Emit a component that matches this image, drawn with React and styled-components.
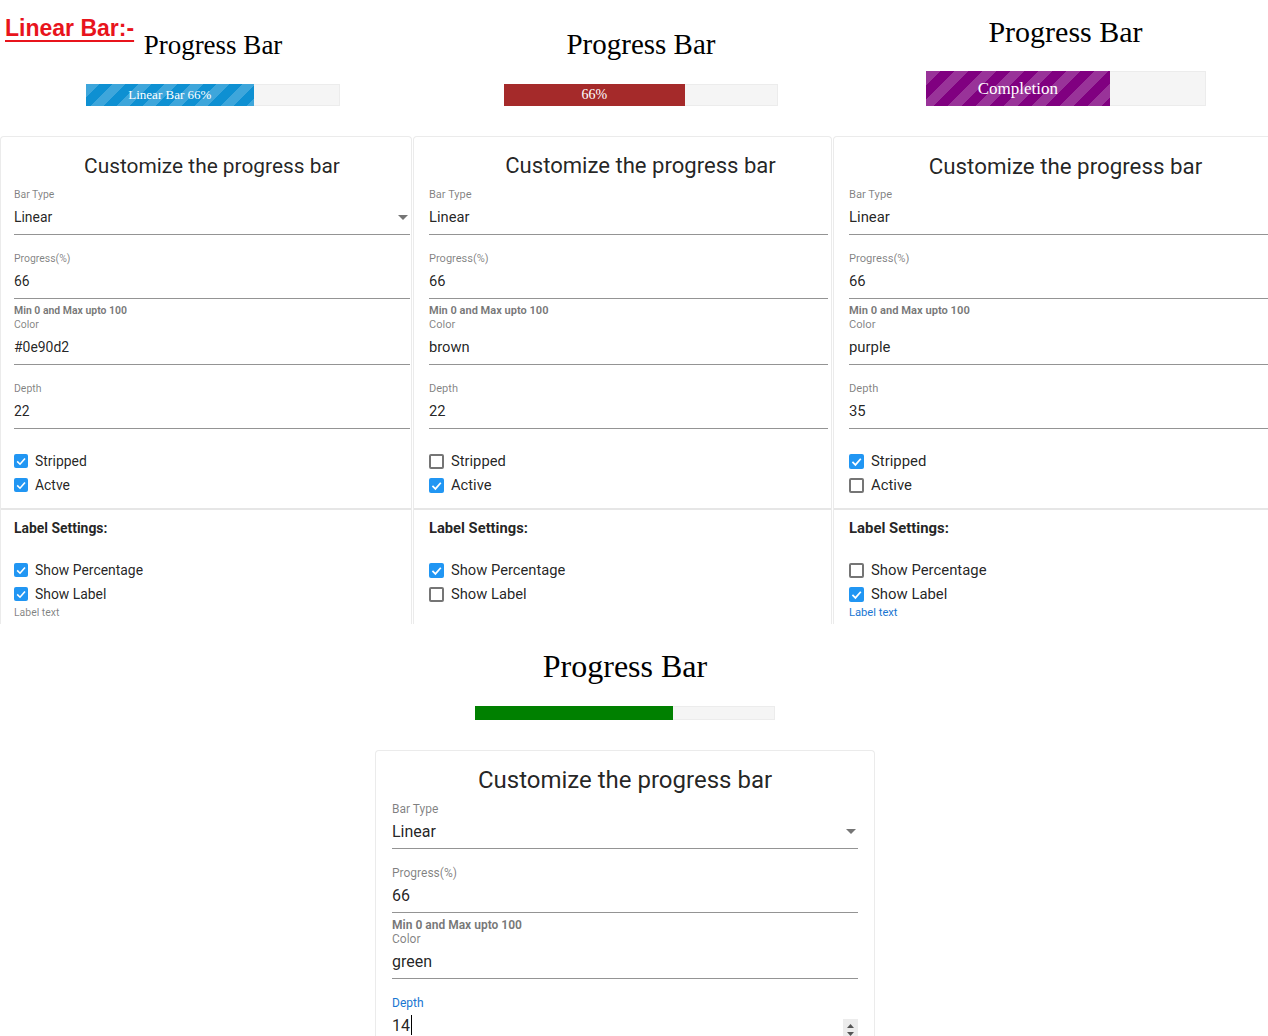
import React from 'react'
import styled, { createGlobalStyle, css } from 'styled-components'

const GlobalStyle = createGlobalStyle`
  html, body {
    margin: 0;
    padding: 0;
    background: #fff;
  }
  body {
    font-family: Roboto, "Liberation Sans", Arial, sans-serif;
    overflow: hidden;
  }
  * {
    box-sizing: border-box;
  }
`

const columns = [
  {
    id: 'blue',
    scale: 0.87,
    pl: 13,
    pr: 1,
    headShift: 14,
    titleShift: 0,
    heading: 27,
    gap: 23,
    bar: { width: 254, height: 22, color: '#0e90d2', striped: true, stripe: 26, label: 'Linear Bar 66%', labelSize: 13 },
    arrow: true,
    color: '#0e90d2',
    depth: 22,
    checks: [
      { text: 'Stripped', checked: true },
      { text: 'Actve', checked: true }
    ],
    labelChecks: [
      { text: 'Show Percentage', checked: true },
      { text: 'Show Label', checked: true }
    ],
    labelText: 'rgba(0, 0, 0, 0.5)'
  },
  {
    id: 'brown',
    scale: 0.92,
    pl: 15,
    pr: 3,
    headShift: 37,
    titleShift: 24,
    heading: 29,
    gap: 23,
    bar: { width: 274, height: 22, color: 'brown', label: '66%', labelSize: 14 },
    color: 'brown',
    depth: 22,
    checks: [
      { text: 'Stripped', checked: false },
      { text: 'Active', checked: true }
    ],
    labelChecks: [
      { text: 'Show Percentage', checked: true },
      { text: 'Show Label', checked: false }
    ]
  },
  {
    id: 'purple',
    scale: 0.93,
    pl: 15,
    pr: 15,
    headShift: 0,
    titleShift: 0,
    heading: 30,
    gap: 22,
    bar: { width: 280, height: 35, color: 'purple', striped: true, stripe: 28, label: 'Completion', labelSize: 17 },
    color: 'purple',
    depth: 35,
    checks: [
      { text: 'Stripped', checked: true },
      { text: 'Active', checked: false }
    ],
    labelChecks: [
      { text: 'Show Percentage', checked: false },
      { text: 'Show Label', checked: true }
    ],
    labelText: '#1976d2'
  }
]

const ProgressBar = ({ bar }) => (
  <Track $width={bar.width} $height={bar.height}>
    <Fill $color={bar.color} $striped={bar.striped} $stripe={bar.stripe} $labelSize={bar.labelSize}>
      {bar.label}
    </Fill>
  </Track>
)

const Checkbox = ({ checked, text, scale }) => (
  <CheckRow $scale={scale}>
    <Box $checked={checked} $size={Math.round(16 * scale)}>
      {checked && (
        <svg width="100%" height="100%" viewBox="0 0 14 14">
          <polyline points="3.2,7.4 6,10.2 11,4.4" fill="none" stroke="#fff" strokeWidth="1.6"/>
        </svg>
      )}
    </Box>
    <span>{text}</span>
  </CheckRow>
)

const Field = ({ label, value, scale, arrow, mt = 17 }) => (
  <FieldWrap $mt={mt}>
    <FieldLabel $scale={scale}>{label}</FieldLabel>
    <ValueRow $scale={scale}>
      <span>{value}</span>
      {arrow && (
        <Arrow width="10" height="5" viewBox="0 0 10 5">
          <path d="M0 0l5 5 5-5z" fill="#757575"/>
        </Arrow>
      )}
    </ValueRow>
  </FieldWrap>
)

const TopColumn = ({ col }) => (
  <Column>
    <Header $shift={col.headShift} $gap={col.gap}>
      <Heading $size={col.heading}>Progress Bar</Heading>
      <ProgressBar bar={col.bar}/>
    </Header>
    <Card $height={488}>
      <Section $pl={col.pl} $pr={col.pr}>
        <Title $scale={col.scale} $shift={col.titleShift}>Customize the progress bar</Title>
        <Field mt={6} label="Bar Type" value="Linear" scale={col.scale} arrow={col.arrow}/>
        <Field label="Progress(%)" value="66" scale={col.scale}/>
        <Helper $scale={col.scale}>Min 0 and Max upto 100</Helper>
        <Field mt={0} label="Color" value={col.color} scale={col.scale}/>
        <Field label="Depth" value={col.depth} scale={col.scale}/>
        <CheckGroup>
          {col.checks.map(c => <Checkbox key={c.text} {...c} scale={col.scale}/>)}
        </CheckGroup>
      </Section>
      <Divider/>
      <Section $pl={col.pl} $pr={col.pr}>
        <SectionTitle $scale={col.scale}>Label Settings:</SectionTitle>
        <CheckGroup>
          {col.labelChecks.map(c => <Checkbox key={c.text} {...c} scale={col.scale}/>)}
        </CheckGroup>
        {col.labelText && <SmallLabel $scale={col.scale} $color={col.labelText}>Label text</SmallLabel>}
      </Section>
    </Card>
  </Column>
)

export default function App () {
  return (
    <Page>
      <GlobalStyle/>
      <Annotation>Linear Bar:-</Annotation>
      <TopRow>
        {columns.map(col => <TopColumn key={col.id} col={col}/>)}
      </TopRow>
      <BottomColumn>
        <Heading $size={32}>Progress Bar</Heading>
        <BottomBar>
          <ProgressBar bar={{ width: 300, height: 14, color: 'green' }}/>
        </BottomBar>
        <Card $height={300}>
          <Section $pl={16} $pr={16}>
            <Title $scale={1}>Customize the progress bar</Title>
            <Field mt={6} label="Bar Type" value="Linear" scale={1} arrow/>
            <Field label="Progress(%)" value="66" scale={1}/>
            <Helper $scale={1}>Min 0 and Max upto 100</Helper>
            <Field mt={0} label="Color" value="green" scale={1}/>
            <FieldWrap $mt={17}>
              <FieldLabel $scale={1} $focused>Depth</FieldLabel>
              <ValueRow $scale={1}>
                <span>14<Caret/></span>
                <Spinner>
                  <svg width="7" height="4" viewBox="0 0 7 4"><path d="M0 4l3.5-4 3.5 4z" fill="#555"/></svg>
                  <svg width="7" height="4" viewBox="0 0 7 4"><path d="M0 0l3.5 4 3.5-4z" fill="#555"/></svg>
                </Spinner>
              </ValueRow>
            </FieldWrap>
          </Section>
        </Card>
      </BottomColumn>
    </Page>
  )
}

const Page = styled.div`
  position: relative;
  width: 1268px;
  height: 1036px;
  overflow: hidden;
  background: #fff;
`

const Annotation = styled.div`
  position: absolute;
  left: 5px;
  top: 17px;
  font-family: "Liberation Sans", Arial, sans-serif;
  font-weight: 700;
  font-size: 23px;
  line-height: 1;
  color: #e8141c;
  text-decoration: underline;
  text-decoration-thickness: 2px;
  text-underline-offset: 4px;
  z-index: 2;
`

const TopRow = styled.div`
  display: grid;
  grid-template-columns: 412px 419px 465px;
  column-gap: 1px;
`

const Column = styled.div`
  display: flex;
  flex-direction: column;
  min-width: 0;
`

const Header = styled.div`
  height: 106px;
  display: flex;
  flex-direction: column;
  justify-content: flex-end;
  align-items: center;
  gap: ${({ $gap }) => $gap}px;
  padding-left: ${({ $shift }) => $shift}px;
  margin-bottom: 30px;
`

const Heading = styled.div`
  font-family: "Liberation Serif", "Times New Roman", serif;
  font-size: ${({ $size }) => $size}px;
  line-height: 1.15;
  color: #000;
`

const Track = styled.div`
  display: flex;
  width: ${({ $width }) => $width}px;
  height: ${({ $height }) => $height}px;
  background: #f5f5f5;
  box-shadow: inset 0 0 0 1px #ececec;
`

const Fill = styled.div`
  width: 66%;
  height: 100%;
  display: flex;
  align-items: center;
  justify-content: center;
  background-color: ${({ $color }) => $color};
  color: #fff;
  font-family: "Liberation Serif", "Times New Roman", serif;
  font-size: ${({ $labelSize }) => $labelSize || 13}px;
  white-space: nowrap;
  ${({ $striped, $stripe }) => $striped && css`
    background-image: linear-gradient(135deg,
      rgba(255, 255, 255, 0.2) 25%, transparent 25%,
      transparent 50%, rgba(255, 255, 255, 0.2) 50%,
      rgba(255, 255, 255, 0.2) 75%, transparent 75%, transparent);
    background-size: ${$stripe}px ${$stripe}px;
  `}
`

const Card = styled.div`
  height: ${({ $height }) => $height}px;
  overflow: hidden;
  background: #fff;
  border: 1px solid #ebebeb;
  border-bottom: none;
  border-radius: 4px 4px 0 0;
  padding-top: 13px;
`

const Section = styled.div`
  padding-left: ${({ $pl }) => $pl}px;
  padding-right: ${({ $pr }) => $pr}px;
`

const Title = styled.div`
  font-size: ${({ $scale }) => 24 * $scale}px;
  line-height: 32px;
  text-align: center;
  color: rgba(0, 0, 0, 0.87);
  padding-left: ${({ $shift }) => $shift || 0}px;
  white-space: nowrap;
`

const FieldWrap = styled.div`
  margin-top: ${({ $mt }) => $mt}px;
`

const FieldLabel = styled.div`
  font-size: ${({ $scale }) => 12 * $scale}px;
  line-height: 14px;
  color: ${({ $focused }) => ($focused ? '#1976d2' : 'rgba(0, 0, 0, 0.5)')};
`

const ValueRow = styled.div`
  display: flex;
  align-items: center;
  justify-content: space-between;
  height: 33px;
  padding: 6px 0 7px;
  line-height: 19px;
  font-size: ${({ $scale }) => 16 * $scale}px;
  color: rgba(0, 0, 0, 0.87);
  border-bottom: 1px solid rgba(0, 0, 0, 0.42);
`

const Arrow = styled.svg`
  margin-right: 2px;
  flex: none;
`

const Caret = styled.span`
  display: inline-block;
  width: 1px;
  height: 20px;
  margin-left: 1px;
  vertical-align: -4px;
  background: #000;
`

const Spinner = styled.div`
  align-self: flex-start;
  margin-top: 3px;
  width: 15px;
  height: 22px;
  display: flex;
  flex-direction: column;
  justify-content: space-around;
  align-items: center;
  background: #ececec;
  padding: 3px 0;
`

const Helper = styled.div`
  margin-top: 5px;
  font-size: ${({ $scale }) => 12 * $scale}px;
  line-height: 14px;
  font-weight: 700;
  color: rgba(0, 0, 0, 0.54);
`

const CheckGroup = styled.div`
  display: flex;
  flex-direction: column;
  margin-top: 20px;
`

const CheckRow = styled.div`
  display: flex;
  align-items: center;
  gap: 7px;
  height: 24px;
  font-size: ${({ $scale }) => 16 * $scale}px;
  color: rgba(0, 0, 0, 0.87);
`

const Box = styled.span`
  flex: none;
  display: inline-flex;
  width: ${({ $size }) => $size}px;
  height: ${({ $size }) => $size}px;
  border-radius: 2px;
  ${({ $checked }) => $checked ? css`
    background: #2196f3;
  ` : css`
    border: 2px solid #757575;
    background: #fff;
  `}
`

const Divider = styled.div`
  height: 2px;
  margin-top: 11px;
  background: #e6e6e6;
`

const SectionTitle = styled.div`
  padding-top: 8px;
  font-size: ${({ $scale }) => 16 * $scale}px;
  line-height: 20px;
  font-weight: 700;
  color: rgba(0, 0, 0, 0.87);
`

const SmallLabel = styled.div`
  font-size: ${({ $scale }) => 12 * $scale}px;
  line-height: 14px;
  color: ${({ $color }) => $color};
`

const BottomColumn = styled.div`
  width: 500px;
  margin-left: 375px;
  margin-top: 24px;
  display: flex;
  flex-direction: column;
  align-items: center;
  & > ${Card} {
    align-self: stretch;
  }
`

const BottomBar = styled.div`
  margin-top: 21px;
  margin-bottom: 30px;
`
